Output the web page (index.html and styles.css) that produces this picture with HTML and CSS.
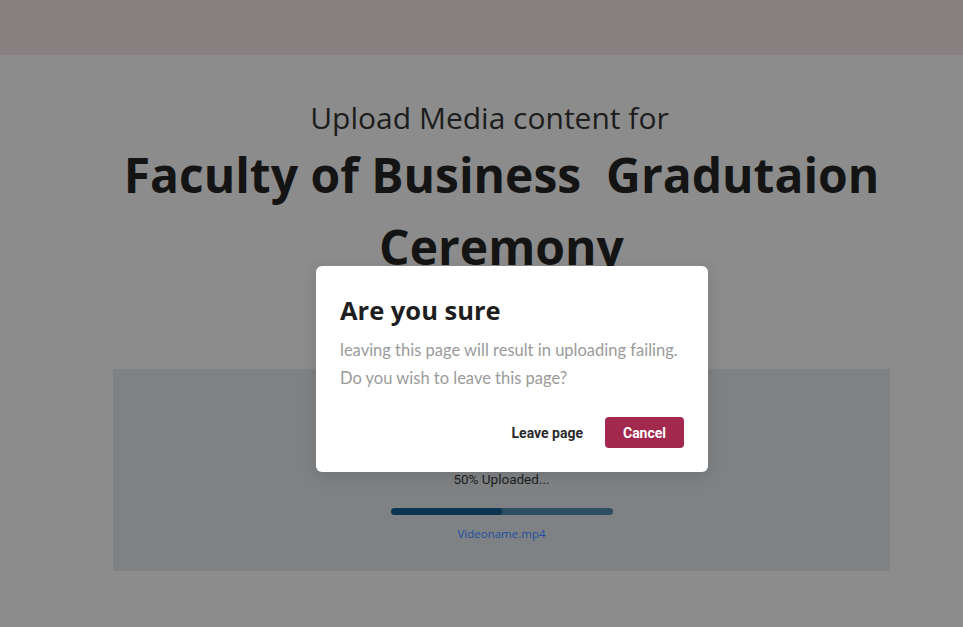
FILE: index.html
```html
<!DOCTYPE html>
<html lang="en">
<head>
<meta charset="utf-8">
<title>Upload Media</title>
<link rel="stylesheet" href="styles.css">
</head>
<body>
<header class="topbar"></header>
<main class="content">
  <p class="subtitle">Upload Media content for</p>
  <h1 class="title">Faculty of Business &nbsp;Gradutaion Ceremony</h1>
  <section class="upload">
    <div class="status">50% Uploaded...</div>
    <div class="progress"><div class="progress-fill" style="width:50%"></div></div>
    <a class="filename" href="#">Videoname.mp4</a>
  </section>
</main>
<div class="dialog" role="dialog">
  <h2 class="dialog-title">Are you sure</h2>
  <p class="dialog-text">leaving this page will result in uploading failing.<br>Do you wish to leave this page?</p>
  <div class="dialog-actions">
    <button class="btn btn-text">Leave page</button>
    <button class="btn btn-primary">Cancel</button>
  </div>
</div>
</body>
</html>
```

FILE: styles.css
```css
* { box-sizing: border-box; }
html, body {
  margin: 0;
  padding: 0;
  height: 100%;
}
body {
  background: #8c8c8c;
  font-family: "Open Sans", "Noto Sans", sans-serif;
  overflow: hidden;
  position: relative;
}
.topbar {
  height: 55px;
  background: #887f80;
}
.content {
  display: flex;
  flex-direction: column;
  align-items: center;
  width: 777px;
  margin-left: 113px;
}
.subtitle {
  margin: 42px 24px 0 0;
  font-size: 30px;
  line-height: 42px;
  font-weight: 400;
  color: #1c1c1c;
}
.title {
  margin: 0;
  width: 100%;
  font-size: 48px;
  line-height: 72px;
  font-weight: 700;
  color: #141414;
  text-align: center;
}
.upload {
  margin-top: 86px;
  width: 100%;
  height: 202px;
  background: #7f8284;
  display: flex;
  flex-direction: column;
  align-items: center;
  padding-top: 100px;
}
.status {
  font-family: Roboto, "Liberation Sans", sans-serif;
  font-size: 13.5px;
  line-height: 20px;
  color: #1e1e1e;
}
.progress {
  margin-top: 19px;
  width: 222px;
  height: 7px;
  border-radius: 4px;
  background: #2d4e60;
  overflow: hidden;
}
.progress-fill {
  height: 100%;
  background: #0a3550;
  border-radius: 4px;
}
.filename {
  margin-top: 10px;
  font-size: 11.5px;
  line-height: 18px;
  color: #1d4ea3;
  text-decoration: none;
}
.dialog {
  position: absolute;
  left: 316px;
  top: 266px;
  width: 392px;
  height: 206px;
  background: #ffffff;
  border-radius: 6px;
  padding: 24px;
  display: flex;
  flex-direction: column;
  box-shadow: 0 4px 16px rgba(0,0,0,0.12);
}
.dialog-title {
  margin: 0;
  font-size: 25.5px;
  line-height: 40px;
  font-weight: 700;
  color: #1e1e1e;
}
.dialog-text {
  margin: 6px 0 0;
  font-family: Lato, "Open Sans", sans-serif;
  font-size: 16.5px;
  line-height: 28px;
  color: #9a9a9a;
}
.dialog-actions {
  margin-top: auto;
  display: flex;
  justify-content: flex-end;
  align-items: center;
  gap: 22px;
}
.btn {
  font-family: Roboto, "Liberation Sans", sans-serif;
  font-size: 14px;
  font-weight: 700;
  border: none;
  cursor: pointer;
  height: 31px;
  border-radius: 4px;
}
.btn-text {
  background: transparent;
  color: #2a2a2a;
  padding: 0;
}
.btn-primary {
  background: #a2294d;
  color: #ffffff;
  width: 79px;
  padding: 0;
}
```
